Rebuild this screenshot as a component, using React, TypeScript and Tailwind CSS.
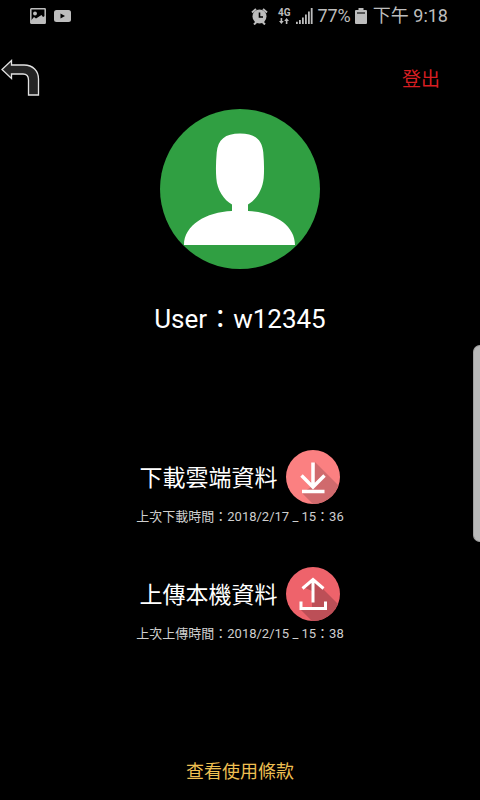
import React from "react";

function AlarmIcon() {
  return (
    <svg width="17" height="17" viewBox="0 0 17 17" fill="none" aria-hidden="true">
      <circle cx="8.500" cy="8.500" r="7" fill="#bdbdbd" />
      <path d="M1 4.500 5 1M12 1l4 3.500M3 16.500l2.500-2.500M14 16.500 11.500 14" stroke="#bdbdbd" strokeWidth="2" />
      <path d="M8.500 4.500v4.500H12" stroke="#000" strokeWidth="1.600" />
    </svg>
  );
}

function SignalIcon() {
  return (
    <svg width="17" height="16" viewBox="0 0 17 16" fill="#bdbdbd" aria-hidden="true">
      <path d="M0 13.800h1.800V16H0zM3 12h1.800v4H3zM6 9.500h1.800V16H6zM9 6.500h1.800V16H9zM12 3.500h1.800V16H12zM14.800 0h1.800v16h-1.800z" />
    </svg>
  );
}

function StatusBar() {
  return (
    <div className="flex h-8 items-center justify-between pr-8 pl-[30px] text-[#bdbdbd]">
      <div className="flex items-center gap-2">
        <svg width="16" height="16" viewBox="0 0 16 16" aria-hidden="true">
          <rect x=".8" y=".8" width="14.400" height="14.400" rx=".5" fill="none" stroke="#bdbdbd" strokeWidth="1.500" />
          <circle cx="5" cy="5.500" r="1.900" fill="#bdbdbd" />
          <path d="M1 12.500 4 9l2 1.500L11.500 7l1.500 2 2-1v7H1z" fill="#bdbdbd" />
        </svg>
        <svg width="17" height="12" viewBox="0 0 17 12" aria-hidden="true">
          <rect width="17" height="12" rx="2.500" fill="#bdbdbd" />
          <path d="m6.500 3.500 4.500 2.500-4.500 2.500z" fill="#000" />
        </svg>
      </div>
      <div className="flex items-center">
        <AlarmIcon />
        <div className="ml-2 flex w-4 flex-col items-center">
          <span className="text-[10px] leading-[10px] font-bold">4G</span>
          <svg width="10" height="6" viewBox="0 0 10 6" fill="#bdbdbd" aria-hidden="true">
            <path d="M1.600 0h1.600v3h1.600L2.400 6 0 3h1.600zM6.800 6h1.600V3H10L7.600 0 5.200 3h1.600z" />
          </svg>
        </div>
        <div className="ml-1">
          <SignalIcon />
        </div>
        <span className="ml-1 text-[18px] leading-5">77%</span>
        <svg className="ml-1" width="12" height="16" viewBox="0 0 12 16" aria-hidden="true">
          <path d="M3.500 0h5v2H11q1 0 1 1v12q0 1-1 1H1q-1 0-1-1V3q0-1 1-1h2.500z" fill="#bdbdbd" />
          <path d="M2 4h8v2H2z" fill="#555" />
        </svg>
        <span className="ml-1.5 text-[18px] leading-5">下午 9:18</span>
      </div>
    </div>
  );
}

function Avatar() {
  return (
    <svg width="160" height="160" viewBox="0 0 160 160" role="img" aria-label="User avatar">
      <circle cx="80" cy="80" r="80" fill="#309f42" />
      <path
        d="M80 24.500c15 0 22 6 23.300 19 .8 9 1 18 .4 25.500C102.500 81 96 91 88 95.500V102c26 1 47 14 47 34H24c0-20 22-33 48-34v-6.500C64 91 57 81 56.300 69c-.6-7.500-.4-16.500.4-25.500C58 30.500 65 24.500 80 24.500z"
        fill="#fff"
      />
    </svg>
  );
}

function DownloadIcon() {
  return (
    <svg width="54" height="54" viewBox="0 0 54 54" aria-hidden="true">
      <clipPath id="download-disc">
        <circle cx="27" cy="27" r="27" />
      </clipPath>
      <g clipPath="url(#download-disc)">
        <path d="M0 0h54v54H0z" fill="#fb8081" />
        <path d="m29 12 30 30v20H35L16 43l9-6-9-11 11 7z" fill="#d06a6d" />
      </g>
      <path d="M27 12.500V36M15.500 25.500 27 37l11.500-11.500M16 41.500h22.500" fill="none" stroke="#fff" strokeWidth="3.500" />
    </svg>
  );
}

function UploadIcon() {
  return (
    <svg width="54" height="54" viewBox="0 0 54 54" aria-hidden="true">
      <clipPath id="upload-disc">
        <circle cx="27" cy="27" r="27" />
      </clipPath>
      <g clipPath="url(#upload-disc)">
        <path d="M0 0h54v54H0z" fill="#ee636b" />
        <path d="m27 12 35 35v17H36L14 42l12-1V24l-9-4z" fill="#bc4f57" />
      </g>
      <path d="M27 35.500V13M16.500 21.500 27 12.500l10.500 9M15 34.500v7h24.500v-7" fill="none" stroke="#fff" strokeWidth="3" />
    </svg>
  );
}

type SyncActionProps = { label: string; time: string; icon: React.ReactNode };

function SyncAction({ label, time, icon }: SyncActionProps) {
  return (
    <section className="flex flex-col items-center">
      <button type="button" className="flex items-center gap-[9px] text-[23px] leading-8 text-white">
        <span className="pt-1">{label}</span>
        {icon}
      </button>
      <p className="mt-[3px] text-[13px] leading-5 text-[#cfcfcf]">{time}</p>
    </section>
  );
}

export default function App() {
  return (
    <div className="relative flex min-h-screen flex-col bg-black font-[Roboto,'Noto_Sans_CJK_TC',sans-serif]">
      <StatusBar />
      <header className="mt-6 flex h-11 items-center justify-between pr-10">
        <button type="button" aria-label="返回">
          <svg width="40" height="38" viewBox="0 0 40 38" aria-hidden="true">
            <path
              d="M2 10.500 11.500 1.500V6H24c9 0 14.500 6 14.500 14v16h-10V21c0-4-2-6-5.500-6H11.500v4.500z"
              fill="#242424"
              stroke="#e2e2e2"
              strokeWidth="1.300"
            />
          </svg>
        </button>
        <button type="button" className="pt-1 text-[19px] leading-7 text-[#d81e22]">
          登出
        </button>
      </header>
      <main className="flex flex-col items-center">
        <div className="mt-[9px]">
          <Avatar />
        </div>
        <h1 className="mt-[34px] text-[26px] leading-8 text-white">User：w12345</h1>
        <div className="mt-[115px] flex flex-col gap-10">
          <SyncAction label="下載雲端資料" time="上次下載時間：2018/2/17 _ 15：36" icon={<DownloadIcon />} />
          <SyncAction label="上傳本機資料" time="上次上傳時間：2018/2/15 _ 15：38" icon={<UploadIcon />} />
        </div>
      </main>
      <footer className="mt-auto flex justify-center pb-3.5">
        <a href="#terms" className="text-[18px] leading-7 text-[#eebf52]">
          查看使用條款
        </a>
      </footer>
      <div className="absolute top-[345px] right-0 h-[197px] w-[7px] rounded-l-[7px] border border-r-0 border-[#a0a0a0] bg-[#b9b9b9]" />
    </div>
  );
}
